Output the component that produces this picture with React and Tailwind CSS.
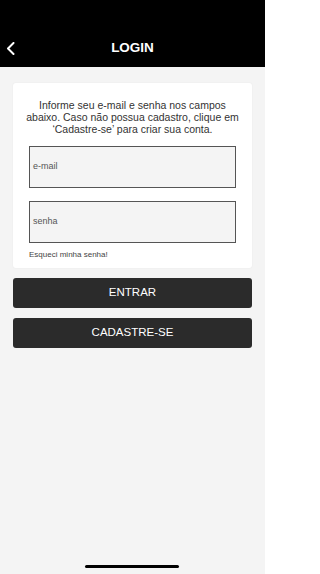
export default function App() {
  return (
    <div className="w-[265px] h-[574px] bg-[#f4f4f4] flex flex-col relative overflow-hidden" style={{ fontFamily: '"Liberation Sans", Arial, sans-serif' }}>
      <div className="h-[67px] bg-black flex items-end shrink-0 relative">
        <div className="h-[34px] w-full flex items-center justify-center relative">
          <svg className="absolute left-[6px] top-[9px]" width="9" height="13" viewBox="0 0 9 13" fill="none">
            <path d="M7.5 1 L2 6.5 L7.5 12" stroke="white" strokeWidth="2" strokeLinecap="round" strokeLinejoin="round" />
          </svg>
          <span className="text-white font-bold text-[13.5px] mb-[3px]">LOGIN</span>
        </div>
      </div>
      <div className="px-[13px] pt-[16px] flex flex-col">
        <div className="bg-white rounded-[3px] shadow-[0_0_2px_rgba(0,0,0,0.06)] px-[16px] pt-[16px] pb-[8px] flex flex-col">
          <p className="text-[#333] text-[10.5px] leading-[12px] text-center -mx-[6px]">
            Informe seu e-mail e senha nos campos abaixo. Caso não possua cadastro, clique em ‘Cadastre-se’ para criar sua conta.
          </p>
          <div className="mt-[11px] h-[42px] border border-[#555] bg-[#f4f4f4] flex items-center px-[3px]">
            <span className="text-[#555] text-[9px]">e-mail</span>
          </div>
          <div className="mt-[13px] h-[42px] border border-[#555] bg-[#f4f4f4] flex items-center px-[3px]">
            <span className="text-[#555] text-[9px]">senha</span>
          </div>
          <span className="mt-[7px] text-[#444] text-[8px] leading-[10px]">Esqueci minha senha!</span>
        </div>
        <button className="mt-[10px] h-[30px] bg-[#2b2b2b] rounded-[3px] text-white text-[11.5px] flex items-center justify-center">ENTRAR</button>
        <button className="mt-[10px] h-[30px] bg-[#2b2b2b] rounded-[3px] text-white text-[11.5px] flex items-center justify-center">CADASTRE-SE</button>
      </div>
      <div className="absolute left-[85px] top-[565px] w-[94px] h-[3px] rounded-full bg-black" />
    </div>
  );
}
